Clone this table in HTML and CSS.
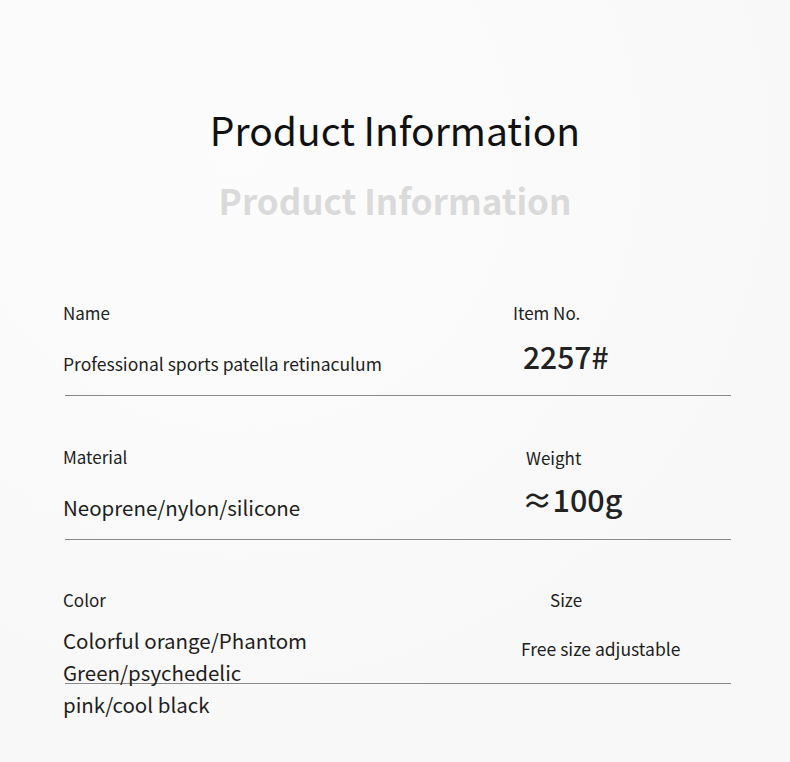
FILE: index.html
```html
<!DOCTYPE html>
<html lang="en">
<head>
    <meta charset="UTF-8">
    <meta name="viewport" content="width=device-width, initial-scale=1.0">
    <title>Product Information</title>
    <link rel="stylesheet" href="styles.css">
</head>
<body>
    <div class="page">
        <div class="heading">
            <h1 class="title">Product Information</h1>
            <h2 class="subtitle">Product Information</h2>
        </div>

        <div class="specs">
            <div class="spec-row">
                <div class="cell">
                    <div class="label">Name</div>
                    <div class="value value-name">Professional sports patella retinaculum</div>
                </div>
                <div class="cell cell-item">
                    <div class="label">Item No.</div>
                    <div class="value value-big value-item">2257#</div>
                </div>
            </div>

            <div class="spec-row">
                <div class="cell">
                    <div class="label">Material</div>
                    <div class="value value-material">Neoprene/nylon/silicone</div>
                </div>
                <div class="cell cell-weight">
                    <div class="label label-weight">Weight</div>
                    <div class="value value-big value-weight">&asymp;100g</div>
                </div>
            </div>

            <div class="spec-row">
                <div class="cell">
                    <div class="label label-color">Color</div>
                    <div class="value value-color">Colorful orange/Phantom<br>Green/psychedelic<br>pink/cool black</div>
                </div>
                <div class="cell cell-size">
                    <div class="label label-color">Size</div>
                    <div class="value value-size">Free size adjustable</div>
                </div>
            </div>
        </div>
    </div>
</body>
</html>
```

FILE: styles.css
```css
/* Product info sheet */
body {
    margin: 0;
    background: #fafafa;
    font-family: 'Noto Sans CJK SC', 'Noto Sans', sans-serif;
    color: #1e1e1e;
}

.page {
    width: 790px;
    height: 762px;
    overflow: hidden;
    background: radial-gradient(circle at 30% 20%, #fcfcfc, #f8f8f8 70%);
}

.heading {
    padding-top: 106px;
    text-align: center;
}

.title {
    margin: 0;
    font-size: 39px;
    line-height: 46px;
    font-weight: 400;
    color: #111;
}

.subtitle {
    margin: 26px 0 0;
    font-size: 35px;
    line-height: 44px;
    font-weight: 700;
    color: #dadada;
}

.specs {
    margin-top: 74px;
}

.spec-row {
    display: grid;
    grid-template-columns: 450px 1fr;
    height: 99px;
    margin: 0 59px 44px 65px;
    border-bottom: 1px solid #8a8a8a;
    overflow: visible;
}

.cell {
    margin-left: -2px;
}

.cell-weight {
    padding-left: 13px;
}

.cell-size {
    padding-left: 37px;
}

.label {
    padding-top: 6px;
    font-size: 17px;
    line-height: 22px;
    color: #222;
}

.label-weight {
    padding-top: 7px;
}

.label-color {
    padding-top: 5px;
}

.value {
    color: #1e1e1e;
}

.value-name {
    margin-top: 28px;
    font-size: 17.5px;
    line-height: 24px;
}

.value-material {
    margin-top: 25px;
    font-size: 20.5px;
    line-height: 28px;
}

.value-color {
    margin-top: 13px;
    font-size: 20.5px;
    line-height: 32px;
}

.value-size {
    margin-top: 26px;
    margin-left: -29px;
    font-size: 17.5px;
    line-height: 24px;
}

.value-big {
    font-weight: 500;
    color: #222;
}

.value-item {
    margin-top: 14px;
    margin-left: 10px;
    font-size: 30px;
    line-height: 36px;
}

.value-weight {
    margin-top: 12px;
    margin-left: -4px;
    font-size: 30.5px;
    line-height: 36px;
}
```
